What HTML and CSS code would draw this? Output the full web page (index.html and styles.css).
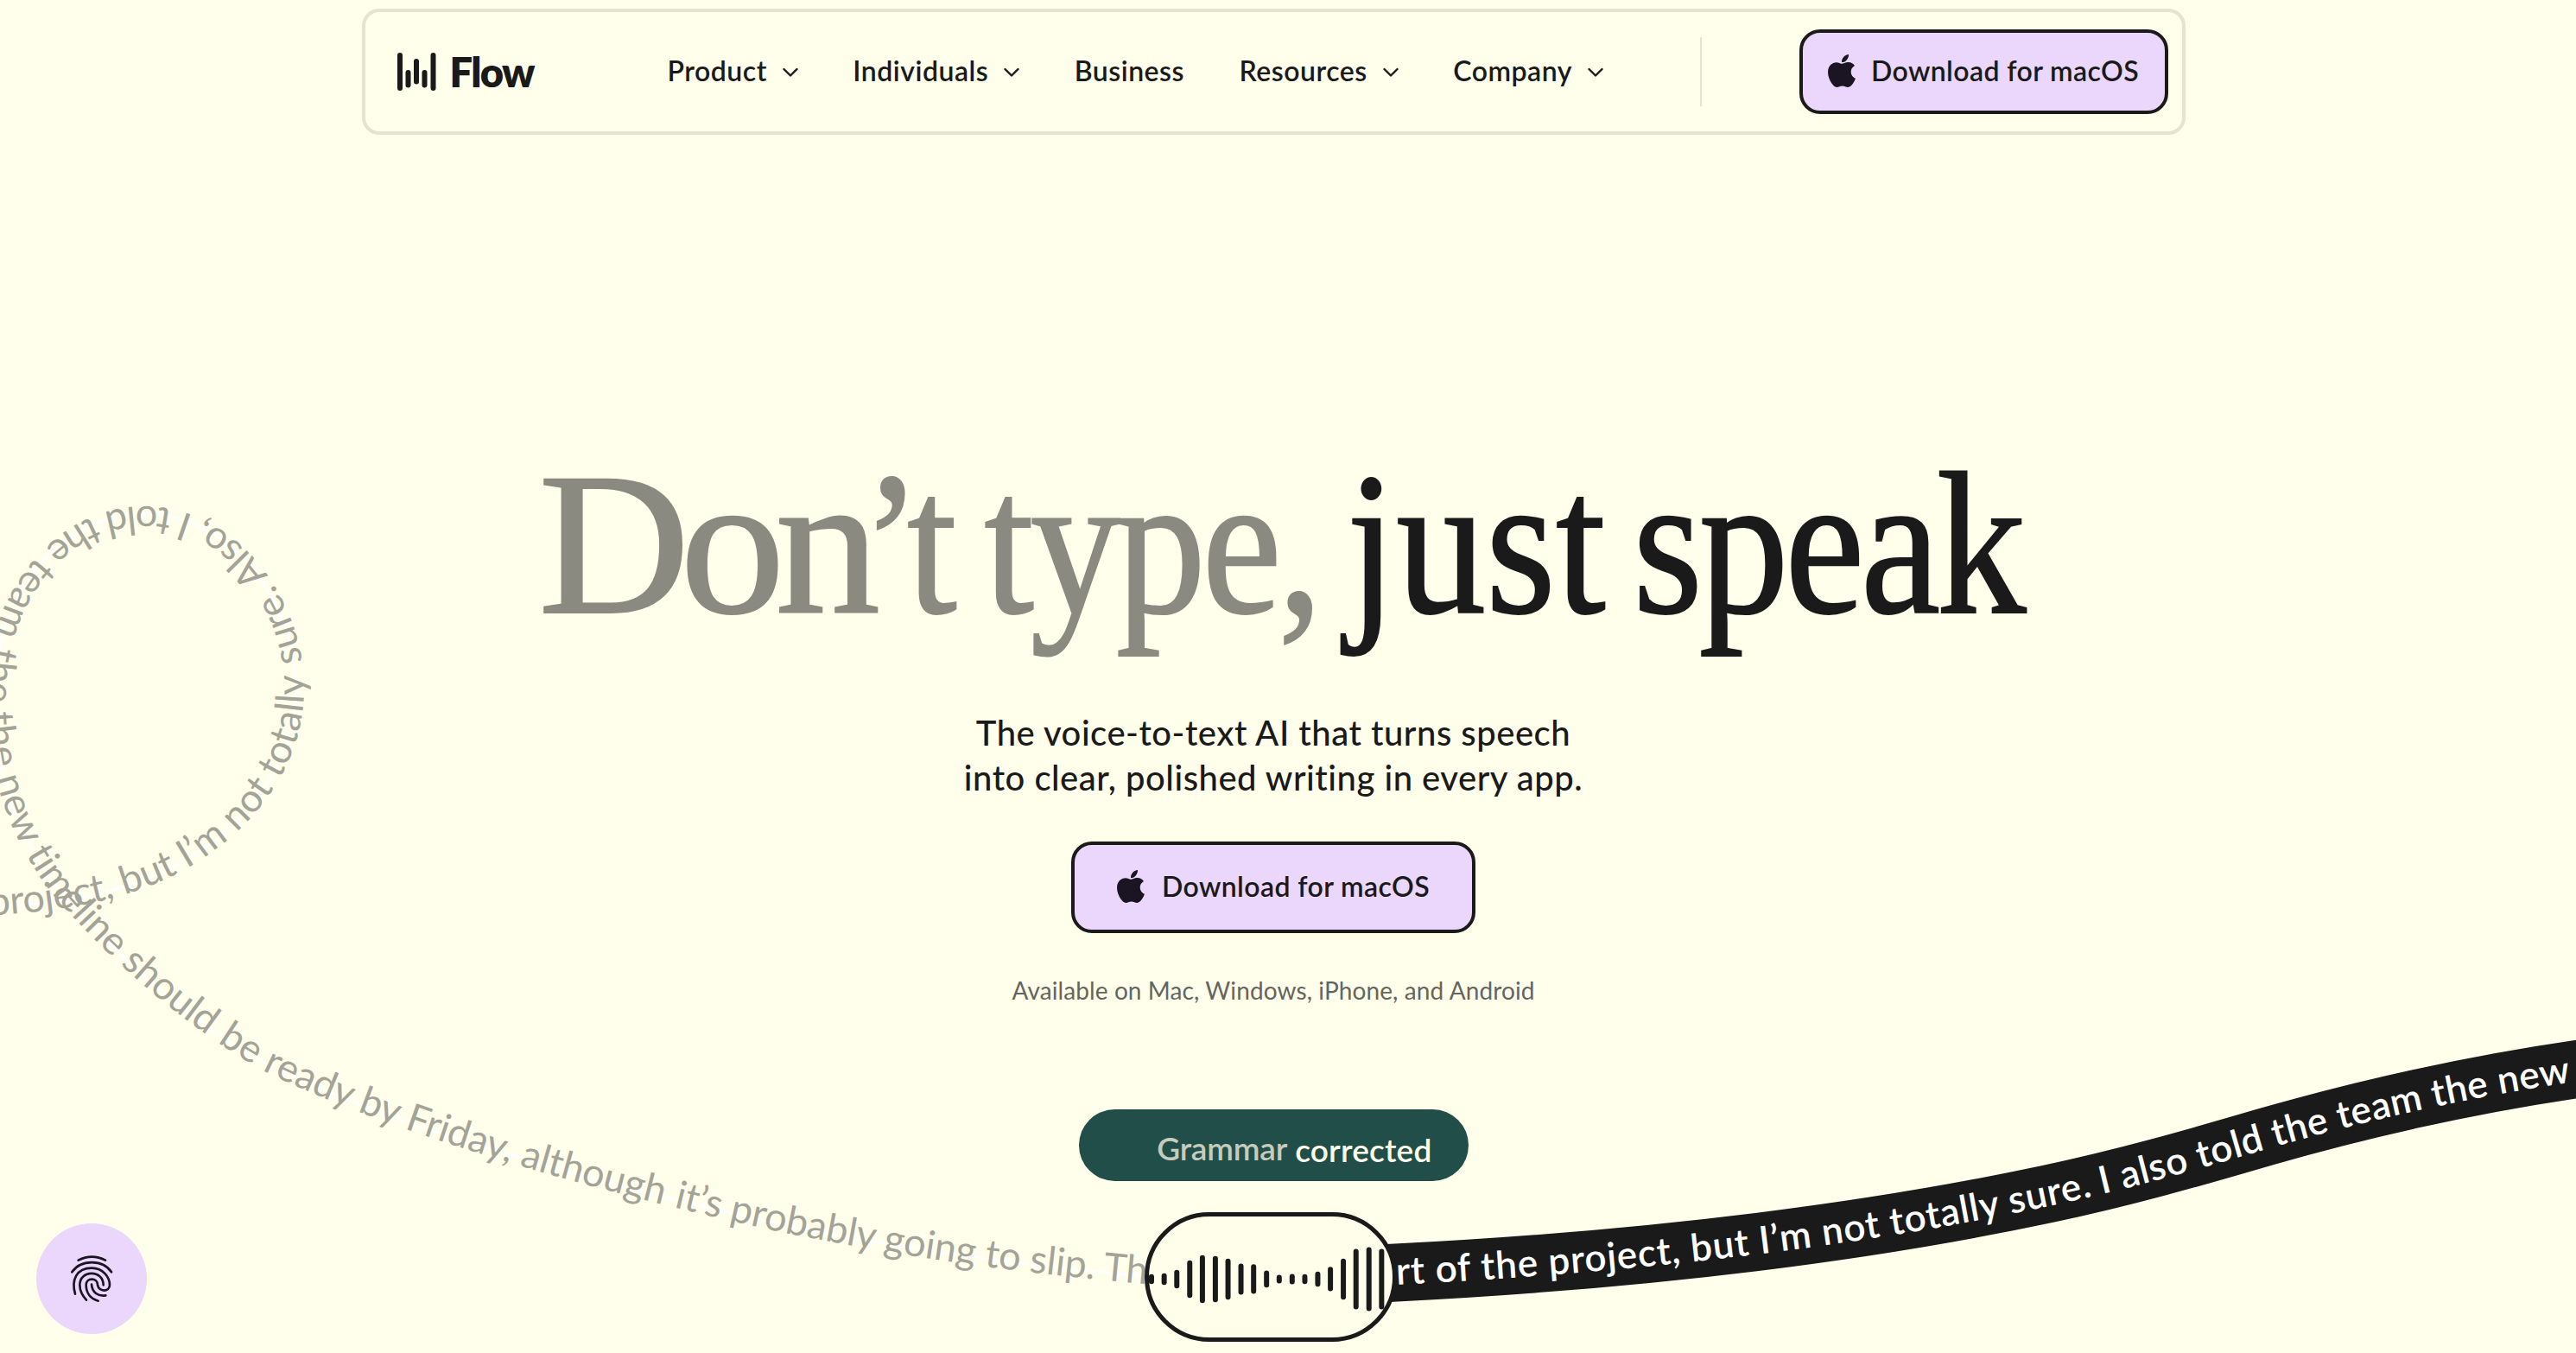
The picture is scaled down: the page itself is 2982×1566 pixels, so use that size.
FILE: index.html
```html
<!DOCTYPE html>
<html lang="en">
<head>
	<meta charset="UTF-8">
	<title>Flow</title>
	<link rel="stylesheet" href="styles.css">
</head>
<body>
	<svg class="ribbon" viewBox="0 0 2982 1566">
		<defs>
			<path id="messy" d="M-60 1052C30 1050 125 1043 203 1002C290 955 343 880 343 797C343 700 270 595 167 595C70 595 -7 690 -7 805C-7 890 18 965 67 1028C128 1100 215 1178 308 1231C450 1300 650 1358 838 1402C1000 1440 1165 1463 1325 1477L1400 1483"/>
			<path id="clean" d="M1560 1476L1616 1473C1870 1460 2125 1434 2370 1382C2460 1363 2540 1340 2622 1316C2730 1285 2850 1256 3000 1235"/>
		</defs>
		<use href="#messy" class="thread"/>
		<g class="messy-text">
			<text dy="9"><textPath href="#messy" startOffset="47" textLength="500">project, but I’m not totally</textPath></text>
			<text dy="9"><textPath href="#messy" startOffset="560" textLength="499">sure. Also, I told the team</textPath></text>
			<text dy="9"><textPath href="#messy" startOffset="1073" textLength="537">the the new timeline should</textPath></text>
			<text dy="9"><textPath href="#messy" startOffset="1624" textLength="548">be ready by Friday, although</textPath></text>
			<text dy="9"><textPath href="#messy" startOffset="2185" textLength="554">it’s probably going to slip. Th</textPath></text>
		</g>
		<use href="#clean" class="band"/>
		<g class="clean-text">
			<text dy="14"><textPath href="#clean" startOffset="56" textLength="811">rt of the project, but I’m not totally sure.</textPath></text>
			<text dy="14"><textPath href="#clean" startOffset="878" textLength="560">I also told the team the new</textPath></text>
		</g>
	</svg>

	<svg class="sprite">
		<symbol id="apple" viewBox="4 32 376.5 448">
			<path d="M318.7 268.7c-.2-36.7 16.4-64.4 50-84.8-18.8-26.9-47.2-41.7-84.7-44.6-35.5-2.8-74.3 20.7-88.5 20.7-15 0-49.4-19.7-76.4-19.7C63.3 141.2 4 184.8 4 273.5q0 39.3 14.4 81.2c12.8 36.7 59 126.7 107.2 125.2 25.2-.6 43-17.9 75.8-17.9 31.8 0 48.3 17.9 76.4 17.9 48.6-.7 90.4-82.5 102.6-119.3-65.2-30.7-61.7-90-61.7-91.9zm-56.6-164.2c27.3-32.4 24.8-61.9 24-72.5-24.1 1.4-52 16.4-67.9 34.9-17.5 19.8-27.8 44.3-25.6 71.9 26.1 2 49.9-11.4 69.5-34.3z"/>
		</symbol>
		<symbol id="chevron" viewBox="0 0 18 12">
			<path d="M1.5 2L9 9.5L16.5 2" fill="none" stroke="#1a1a1a" stroke-width="2.4" stroke-linecap="round" stroke-linejoin="round"/>
		</symbol>
	</svg>

	<div class="page">
		<header class="header">
			<a class="logo">
				<svg class="logo-mark" viewBox="0 0 45 44">
					<path d="M3 3V41M12.5 23V37.5M22 10V33.5M31.5 23V37.5M41.5 3V41"/>
				</svg>
				<span>Flow</span>
			</a>
			<nav class="nav">
				<a>Product<svg class="chevron"><use href="#chevron"/></svg></a>
				<a>Individuals<svg class="chevron"><use href="#chevron"/></svg></a>
				<a>Business</a>
				<a>Resources<svg class="chevron"><use href="#chevron"/></svg></a>
				<a>Company<svg class="chevron"><use href="#chevron"/></svg></a>
			</nav>
			<div class="divider"></div>
			<a class="btn btn-header"><svg class="apple"><use href="#apple"/></svg><span>Download for macOS</span></a>
		</header>

		<main class="hero">
			<h1 class="title">
				<span class="dim"><span class="wide">Don</span><span class="quote">’</span>t</span>
				<span class="dim tight">type,</span>
				<span>just</span>
				<span class="tight">speak</span>
			</h1>
			<p class="lead">The voice-to-text AI that turns speech<br>into clear, polished writing in every app.</p>
			<a class="btn btn-hero"><svg class="apple"><use href="#apple"/></svg><span>Download for macOS</span></a>
			<p class="note">Available on Mac, Windows, iPhone, and Android</p>
			<div class="pill"><span class="word">Grammar</span><span class="word done">corrected</span></div>
			<div class="mic">
				<svg class="wave" viewBox="314 429 877 449">
					<path d="M338 653v16M382 650v22M426 638v46M471 605v112M515 587v148M560 590v142M604 599v124M649 616v90M693 618v85M738 640v41M782 655v12M827 652v18M871 653v16M916 644v34M960 627v67M1005 599v124M1049 565v192M1094 559v204M1138 565v192"/>
				</svg>
			</div>
		</main>
	</div>

	<button class="privacy">
		<svg class="finger" viewBox="138 150 180 180">
			<path d="M182 176Q229 152 276 176"/>
			<path d="M160 217C190 172 268 172 297 217"/>
			<path d="M171 293C157 245 175 203 229 203C268 203 291 235 291 262C291 287 253 287 249 262C249 235 209 235 209 262C209 290 225 310 251 317"/>
			<path d="M210 314C195 298 187 280 187 262C187 208 269 208 269 262"/>
			<path d="M228 260C230 288 250 302 277 298"/>
		</svg>
	</button>
</body>
</html>
```

FILE: styles.css
```css
* {
	box-sizing: border-box;
}

body {
	margin: 0;
	height: 1566px;
	overflow: hidden;
	background-color: #ffffeb;
	color: #1a1a1a;
	font-family: Lato, "Open Sans", sans-serif;
}

.sprite {
	position: absolute;
	width: 0;
	height: 0;
}

.page {
	width: 2948px;
	padding-top: 10px;
}

/* header */

.header {
	display: flex;
	align-items: center;
	width: 2111px;
	height: 146px;
	margin: 0 auto;
	padding: 0 16px 0 37px;
	border: 4px solid #e4e4d0;
	border-radius: 20px;
}

.logo {
	display: flex;
	align-items: center;
	width: 313px;
	font-size: 47px;
	font-weight: 800;
	letter-spacing: -1.6px;
}

.logo-mark {
	width: 45px;
	height: 44px;
	margin-right: 16px;
	fill: none;
	stroke: #1a1a1a;
	stroke-width: 6;
	stroke-linecap: round;
}

.nav {
	display: flex;
	gap: 63.5px;
	padding-bottom: 3px;
	font-size: 32px;
	font-weight: 600;
	letter-spacing: 0.5px;
}

.nav a {
	display: flex;
	align-items: center;
}

.chevron {
	width: 18px;
	height: 12px;
	margin: 4px 0 0 18px;
}

.divider {
	width: 2px;
	height: 80px;
	margin: 0 113px 0 auto;
	background-color: #e4e4d0;
}

.btn {
	display: flex;
	align-items: center;
	justify-content: center;
	border: 4px solid #1a1a1a;
	border-radius: 24px;
	background-color: #ead7fb;
	font-size: 32px;
	font-weight: 600;
	letter-spacing: 0.4px;
	padding-bottom: 3px;
}

.apple {
	width: 32px;
	height: 38px;
	fill: #1a1423;
}

.btn-header {
	width: 427px;
	height: 98px;
}

.btn-header .apple {
	margin-right: 18px;
}

/* hero */

.hero {
	display: flex;
	flex-direction: column;
	align-items: center;
	padding-top: 354px;
}

.title {
	display: flex;
	gap: 36px;
	height: 240px;
	margin: 0 0 72px 16px;
	font: 400 236px/240px "Liberation Serif", serif;
	transform: scaleX(0.88);
	-webkit-text-stroke: 2px;
}

.dim {
	color: #8a8a80;
}

.tight {
	letter-spacing: -5px;
}

.wide {
	display: inline-block;
	margin-right: 52px;
	letter-spacing: -11px;
	transform: scaleX(1.17);
	transform-origin: left;
}

.quote {
	letter-spacing: -19px;
}

.lead {
	margin: 0;
	text-align: center;
	font-size: 40px;
	font-weight: 500;
	line-height: 52px;
	letter-spacing: 0.5px;
}

.btn-hero {
	width: 468px;
	height: 106px;
	margin-top: 48px;
}

.btn-hero .apple {
	margin-right: 20px;
}

.note {
	margin: 46px 0 0;
	font-size: 28px;
	line-height: 40px;
	letter-spacing: 0.1px;
	color: #65655d;
}

.pill {
	display: flex;
	justify-content: flex-end;
	align-items: center;
	width: 451px;
	height: 83px;
	margin-top: 118px;
	padding: 9px 42px 0 0;
	border-radius: 42px;
	background-color: #214e48;
	font-size: 37px;
	font-weight: 600;
}

.word {
	margin-right: 9px;
	padding-bottom: 4px;
	color: #c5ccbc;
	letter-spacing: -0.2px;
}

.done {
	margin-right: 0;
	padding-bottom: 0;
	color: #ffffeb;
	letter-spacing: 0.2px;
}

.mic {
	width: 292px;
	height: 150px;
	margin-top: 36px;
	margin-right: 6px;
	border: 5px solid #1a1a1a;
	border-radius: 75px;
	background-color: #fffeeb;
}

.wave {
	display: block;
	width: 292px;
	height: 150px;
	margin: -5px;
	fill: none;
	stroke: #1a1a1a;
	stroke-width: 18;
	stroke-linecap: round;
}

/* speech ribbon behind the hero */

.ribbon {
	position: absolute;
	top: 0;
	left: 0;
	z-index: -1;
	width: 2982px;
	height: 1566px;
	font-size: 45px;
	font-variant-ligatures: none;
}

.thread {
	fill: none;
	stroke: #fff;
	stroke-width: 3;
}

.band {
	fill: none;
	stroke: #1a1a1a;
	stroke-width: 67;
}

.messy-text {
	fill: #a3a398;
}

.clean-text {
	fill: #fff;
	font-weight: 600;
	font-size: 44px;
}

/* privacy button */

.privacy {
	position: fixed;
	left: 42px;
	bottom: 22px;
	display: flex;
	align-items: center;
	justify-content: center;
	width: 128px;
	height: 128px;
	padding: 0;
	border: 0;
	border-radius: 50%;
	background-color: #ead7fb;
}

.finger {
	width: 60px;
	height: 60px;
	fill: none;
	stroke: #1a1423;
	stroke-width: 8;
	stroke-linecap: round;
}
```
